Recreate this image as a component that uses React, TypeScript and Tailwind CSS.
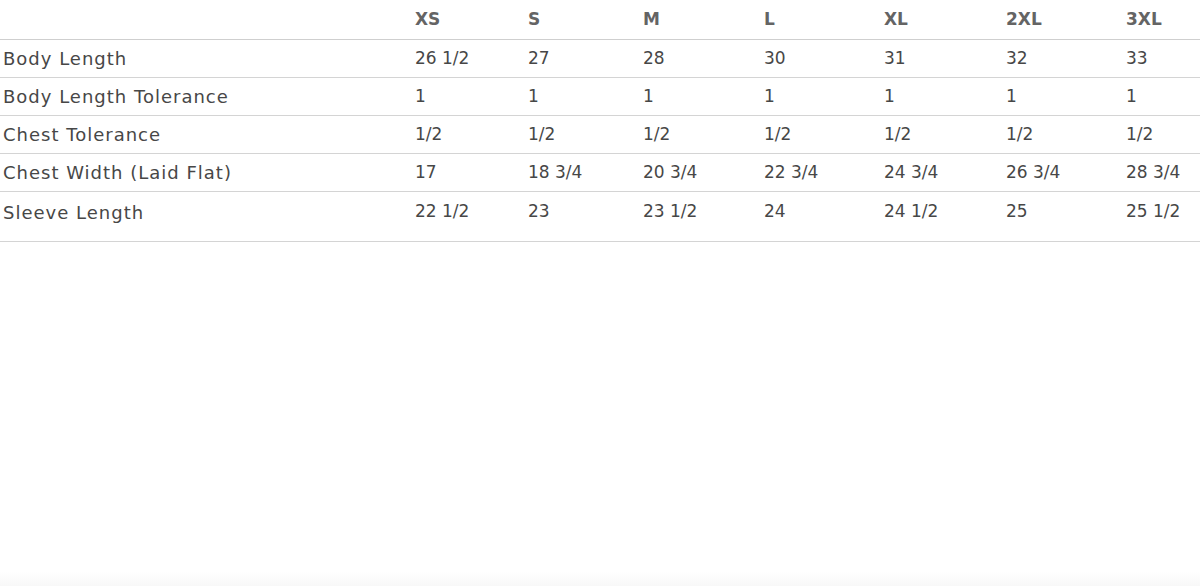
const sizes = ["XS", "S", "M", "L", "XL", "2XL", "3XL"];

const rows: { label: string; values: string[] }[] = [
  { label: "Body Length", values: ["26 1/2", "27", "28", "30", "31", "32", "33"] },
  { label: "Body Length Tolerance", values: ["1", "1", "1", "1", "1", "1", "1"] },
  { label: "Chest Tolerance", values: ["1/2", "1/2", "1/2", "1/2", "1/2", "1/2", "1/2"] },
  {
    label: "Chest Width (Laid Flat)",
    values: ["17", "18 3/4", "20 3/4", "22 3/4", "24 3/4", "26 3/4", "28 3/4"],
  },
  { label: "Sleeve Length", values: ["22 1/2", "23", "23 1/2", "24", "24 1/2", "25", "25 1/2"] },
];

const cols = "grid grid-cols-[412px_113px_115px_121px_120px_122px_120px_1fr]";

export default function App() {
  return (
    <div
      className="h-[586px] w-[1200px] bg-white flex flex-col text-[#474747]"
      style={{ fontFamily: '"DejaVu Sans", sans-serif' }}
    >
      {/* Header */}
      <div className={`${cols} h-[40px] border-b border-[#cfcfcf]`}>
        <div />
        {sizes.map((s) => (
          <div key={s} className="flex items-end pb-[7px] pl-[3px] text-[17px] font-bold text-[#646464]">
            {s}
          </div>
        ))}
      </div>

      {/* Body rows */}
      {rows.map((r, i) => (
        <div
          key={r.label}
          className={`${cols} border-b border-[#d4d4d4] text-[17px] ${
            i === rows.length - 1 ? "h-[50px] items-start pt-[7px]" : "h-[38px] items-center"
          }`}
        >
          <div className="pl-[3px] text-[18px] tracking-[1px]">{r.label}</div>
          {r.values.map((v, j) => (
            <div key={j} className="pl-[3px]">
              {v}
            </div>
          ))}
        </div>
      ))}

      <div className="flex-1" />
      <div className="h-[14px] bg-gradient-to-b from-white to-[#f8f8f8]" />
    </div>
  );
}
